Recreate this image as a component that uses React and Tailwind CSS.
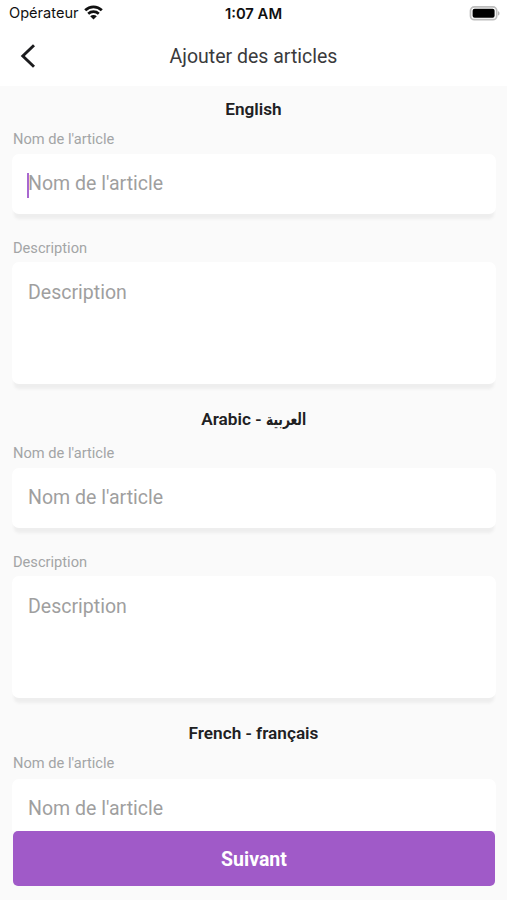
const fieldShadow = 'shadow-[0_7px_3px_-2px_#eeeeee]';

function Label({ children }) {
  return <div className="h-5 text-[14.65px] leading-5 text-[#a3a5a6]">{children}</div>;
}

function Section({ title, titleGap, labelGap, focused, description = true }) {
  return (
    <section>
      <h2 className="h-[22px] pr-px text-center text-[17.2px] leading-[22px] font-semibold whitespace-nowrap text-[#202022]">
        {title}
      </h2>
      <div className={titleGap}>
        <Label>Nom de l'article</Label>
      </div>
      <div
        className={`${labelGap} -mx-px flex h-[60px] items-center rounded-[7px] bg-white pl-4 ${fieldShadow}`}
      >
        <div className="relative pb-px text-[19.55px] leading-6 text-[#9f9f9f]">
          Nom de l'article
          {focused && <span className="absolute top-px -left-px h-[25px] w-0.5 bg-[#a868d0]" />}
        </div>
      </div>
      {description && (
        <>
          <div className="mt-6">
            <Label>Description</Label>
          </div>
          <div
            className={`mt-1 -mx-px h-[122px] rounded-[7px] bg-white pt-[19px] pl-4 text-[19.55px] leading-6 text-[#9f9f9f] ${fieldShadow}`}
          >
            Description
          </div>
        </>
      )}
    </section>
  );
}

export default function App() {
  return (
    <div className="flex h-[900px] w-full flex-col overflow-hidden bg-[#fafafa] font-[Roboto,'DejaVu_Sans',sans-serif]">
      <header className="h-[86px] shrink-0 bg-white">
        <div className="grid h-7 grid-cols-3 items-center pr-[7px] pl-[9px] font-[Inter,sans-serif] text-[#101010]">
          <div className="flex items-center gap-[5px]">
            <span className="text-[14.6px]">Opérateur</span>
            <svg className="-mt-0.5 h-[15px] w-[19px]" viewBox="0 0 19 15" fill="none" stroke="#101010">
              <path d="M1.2 5.3C5.9.7 13.1.7 17.8 5.3" strokeWidth="2.8" />
              <path d="M4.2 8.7c3-2.8 7.6-2.8 10.6 0" strokeWidth="2.6" />
              <path d="M9.5 14.4 6.2 11.2c1.9-1.7 4.7-1.7 6.6 0z" fill="#101010" stroke="none" />
            </svg>
          </div>
          <div className="-ml-0.5 text-center text-[14.8px] font-semibold">1:07 AM</div>
          <svg className="-mt-0.5 h-[15px] w-[31px] justify-self-end" viewBox="0 0 31 15">
            <rect x="1.5" y=".9" width="26.2" height="12.8" rx="3.8" fill="white" stroke="#bdbdbd" strokeWidth="1.7" />
            <rect x="3.6" y="2.8" width="22" height="9" rx="2" fill="black" />
            <path d="M29 5.2c2 .6 2 3.8 0 4.4z" fill="#b5b5b5" />
          </svg>
        </div>
        <div className="grid h-14 grid-cols-[60px_1fr_60px] items-center">
          <svg className="ml-5 h-6 w-4" viewBox="0 0 16 24" fill="none" stroke="#1c1c1e" strokeWidth="2.9">
            <path d="M14 1.2 2.8 12 14 22.8" />
          </svg>
          <h1 className="pt-0.5 text-center text-[19.5px] leading-6 text-[#3a3a3c]">Ajouter des articles</h1>
        </div>
      </header>

      <main className="min-h-0 flex-1 overflow-hidden pt-3 pr-3 pl-[13px]">
        <Section title="English" titleGap="pt-[9px]" labelGap="mt-[5px]" focused />
        <div className="h-6" />
        <Section
          title={
            <>
              Arabic -{' '}
              <span lang="ar" className="inline-block w-10 text-left">
                <span className="inline-block origin-left scale-x-[0.82] font-['DejaVu_Sans_Condensed','DejaVu_Sans',sans-serif] text-[16.5px]">
                  العربية
                </span>
              </span>
            </>
          }
          titleGap="pt-[13px]"
          labelGap="mt-[5px]"
        />
        <div className="h-6" />
        <Section
          title="French - français"
          titleGap="pt-[9px]"
          labelGap="mt-[6px]"
          description={false}
        />
      </main>

      <footer className="h-[69px] shrink-0 pr-3 pl-[13px]">
        <button className="block h-[55px] w-full rounded-[5px] bg-[#a05ac8] pt-0.5 text-[19.5px] font-bold text-white">
          Suivant
        </button>
      </footer>
    </div>
  );
}
